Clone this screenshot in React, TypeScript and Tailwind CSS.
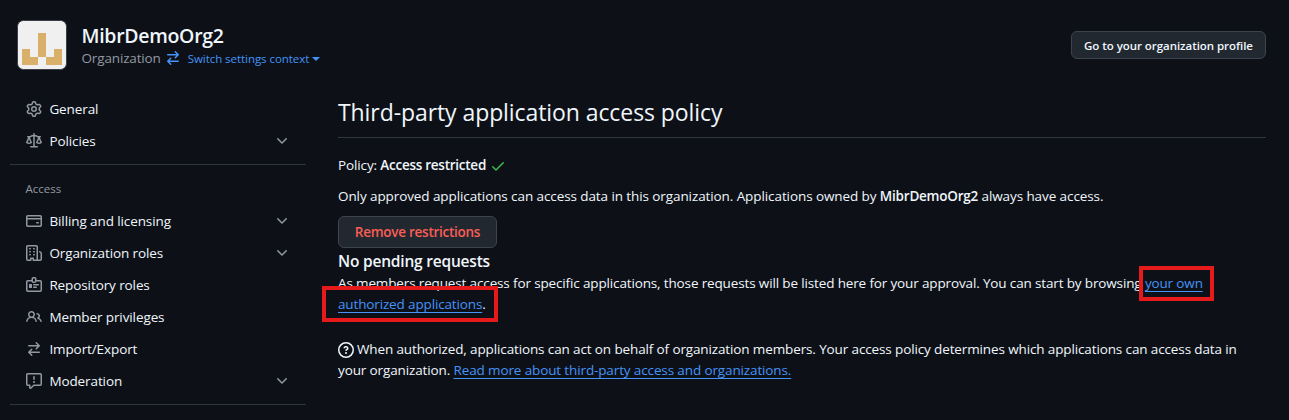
import type { ReactNode } from "react";

const paths = {
  gear: "M8 0a8.2 8.2 0 0 1 .701.031C9.444.095 9.99.645 10.16 1.29l.288 1.107c.018.066.079.158.212.224.231.114.454.243.668.386.123.082.233.09.299.071l1.103-.303c.644-.176 1.392.021 1.82.63.27.385.506.792.704 1.218.315.675.111 1.422-.364 1.891l-.814.806c-.049.048-.098.147-.088.294.016.257.016.515 0 .772-.01.147.038.246.088.294l.814.806c.475.469.679 1.216.364 1.891a7.977 7.977 0 0 1-.704 1.217c-.428.61-1.176.807-1.82.63l-1.102-.302c-.067-.019-.177-.011-.3.071a5.909 5.909 0 0 1-.668.386c-.133.066-.194.158-.211.224l-.29 1.106c-.168.646-.715 1.196-1.458 1.26a8.006 8.006 0 0 1-1.402 0c-.743-.064-1.289-.614-1.458-1.26l-.289-1.106c-.018-.066-.079-.158-.212-.224a5.738 5.738 0 0 1-.668-.386c-.123-.082-.233-.09-.299-.071l-1.103.303c-.644.176-1.392-.021-1.82-.63a8.12 8.12 0 0 1-.704-1.218c-.315-.675-.111-1.422.363-1.891l.815-.806c.05-.048.098-.147.088-.294a6.214 6.214 0 0 1 0-.772c.01-.147-.038-.246-.088-.294l-.815-.806C.635 6.045.431 5.298.746 4.623a7.92 7.92 0 0 1 .704-1.217c.428-.61 1.176-.807 1.82-.63l1.102.302c.067.019.177.011.3-.071.214-.143.437-.272.668-.386.133-.066.194-.158.211-.224l.29-1.106C6.009.645 6.556.095 7.299.03 7.53.01 7.764 0 8 0Zm-.571 1.525c-.036.003-.108.036-.137.146l-.289 1.105c-.147.561-.549.967-.998 1.189-.173.086-.34.183-.5.29-.417.278-.97.423-1.529.27l-1.103-.303c-.109-.03-.175.016-.195.045-.22.312-.412.644-.573.99-.014.031-.021.11.059.19l.815.806c.411.406.562.957.53 1.456a4.709 4.709 0 0 0 0 .582c.032.499-.119 1.05-.53 1.456l-.815.806c-.081.08-.073.159-.059.19.162.346.353.677.573.989.02.03.085.076.195.046l1.102-.303c.56-.153 1.113-.008 1.53.27.161.107.328.204.501.29.447.222.85.629.997 1.189l.289 1.105c.029.109.101.143.137.146a6.6 6.6 0 0 0 1.142 0c.036-.003.108-.036.137-.146l.289-1.105c.147-.561.549-.967.998-1.189.173-.086.34-.183.5-.29.417-.278.97-.423 1.529-.27l1.103.303c.109.029.175-.016.195-.045.22-.313.411-.644.573-.99.014-.031.021-.11-.059-.19l-.815-.806c-.411-.406-.562-.957-.53-1.456a4.709 4.709 0 0 0 0-.582c-.032-.499.119-1.05.53-1.456l.815-.806c.081-.08.073-.159.059-.19a6.464 6.464 0 0 0-.573-.989c-.02-.03-.085-.076-.195-.046l-1.102.303c-.56.153-1.113.008-1.53-.27a4.44 4.44 0 0 0-.501-.29c-.447-.222-.85-.629-.997-1.189l-.289-1.105c-.029-.11-.101-.143-.137-.146a6.6 6.6 0 0 0-1.142 0ZM11 8a3 3 0 1 1-6 0 3 3 0 0 1 6 0ZM9.5 8a1.5 1.5 0 1 0-3.001.001A1.5 1.5 0 0 0 9.5 8Z",
  law: "M8.75.75V2h.985c.304 0 .603.08.867.231l1.29.736c.038.022.08.033.124.033h2.234a.75.75 0 0 1 0 1.5h-.427l2.111 4.692a.75.75 0 0 1-.154.838l-.53-.53.529.531-.001.002-.002.002-.006.006-.006.005-.01.01-.045.04c-.21.176-.441.327-.686.45C14.556 10.78 13.88 11 13 11a4.498 4.498 0 0 1-2.023-.454 3.544 3.544 0 0 1-.686-.45l-.045-.04-.016-.015-.006-.006-.004-.004v-.001a.75.75 0 0 1-.154-.838L12.178 4.5h-.162c-.305 0-.604-.079-.868-.231l-1.29-.736a.245.245 0 0 0-.124-.033H8.75V13h2.5a.75.75 0 0 1 0 1.5h-6.5a.75.75 0 0 1 0-1.5h2.5V3.5h-.984a.245.245 0 0 0-.124.033l-1.289.737c-.265.15-.564.23-.869.23h-.162l2.112 4.692a.75.75 0 0 1-.154.838l-.53-.53.529.531-.001.002-.002.002-.006.006-.016.015-.045.04c-.21.176-.441.327-.686.45C4.556 10.78 3.88 11 3 11a4.498 4.498 0 0 1-2.023-.454 3.544 3.544 0 0 1-.686-.45l-.045-.04-.016-.015-.006-.006-.004-.004v-.001a.75.75 0 0 1-.154-.838L2.178 4.5H1.75a.75.75 0 0 1 0-1.5h2.234a.249.249 0 0 0 .125-.033l1.288-.737c.265-.15.564-.23.869-.23h.984V.75a.75.75 0 0 1 1.5 0Zm2.945 8.477c.285.135.718.273 1.305.273s1.02-.138 1.305-.273L13 6.327Zm-10 0c.285.135.718.273 1.305.273s1.02-.138 1.305-.273L3 6.327Z",
  card: "M10.75 9a.75.75 0 0 0 0 1.5h1.5a.75.75 0 0 0 0-1.5h-1.5Z M0 3.75C0 2.784.784 2 1.75 2h12.5c.966 0 1.75.784 1.75 1.75v8.5A1.75 1.75 0 0 1 14.25 14H1.75A1.75 1.75 0 0 1 0 12.25ZM14.5 6.5h-13v5.75c0 .138.112.25.25.25h12.5a.25.25 0 0 0 .25-.25Zm0-2.75a.25.25 0 0 0-.25-.25H1.75a.25.25 0 0 0-.25.25V5h13Z",
  organization: "M1.75 16A1.75 1.75 0 0 1 0 14.25V1.75C0 .784.784 0 1.75 0h8.5C11.216 0 12 .784 12 1.75v12.5c0 .085-.006.168-.018.25h2.268a.25.25 0 0 0 .25-.25V8.285a.25.25 0 0 0-.111-.208l-1.055-.703a.749.749 0 1 1 .832-1.248l1.055.703c.487.325.779.871.779 1.456v5.965A1.75 1.75 0 0 1 14.25 16h-3.5a.766.766 0 0 1-.197-.026c-.099.017-.2.026-.303.026h-3a.75.75 0 0 1-.75-.75V14h-1v1.25a.75.75 0 0 1-.75.75Zm-.25-1.75c0 .138.112.25.25.25H4v-1.25a.75.75 0 0 1 .75-.75h2.5a.75.75 0 0 1 .75.75v1.25h2.25a.25.25 0 0 0 .25-.25V1.75a.25.25 0 0 0-.25-.25h-8.5a.25.25 0 0 0-.25.25ZM3.75 6h.5a.75.75 0 0 1 0 1.5h-.5a.75.75 0 0 1 0-1.5ZM3 3.75A.75.75 0 0 1 3.75 3h.5a.75.75 0 0 1 0 1.5h-.5A.75.75 0 0 1 3 3.75Zm4 3A.75.75 0 0 1 7.75 6h.5a.75.75 0 0 1 0 1.5h-.5A.75.75 0 0 1 7 6.75ZM7.75 3h.5a.75.75 0 0 1 0 1.5h-.5a.75.75 0 0 1 0-1.5ZM3 9.75A.75.75 0 0 1 3.75 9h.5a.75.75 0 0 1 0 1.5h-.5A.75.75 0 0 1 3 9.75ZM7.75 9h.5a.75.75 0 0 1 0 1.5h-.5a.75.75 0 0 1 0-1.5Z",
  badge: "M3 7.5a.5.5 0 0 1 .5-.5h2a.5.5 0 0 1 .5.5v3a.5.5 0 0 1-.5.5h-2a.5.5 0 0 1-.5-.5v-3Zm10 .25a.75.75 0 0 1-.75.75h-4.5a.75.75 0 0 1 0-1.5h4.5a.75.75 0 0 1 .75.75ZM10.25 11a.75.75 0 0 0 0-1.5h-2.5a.75.75 0 0 0 0 1.5h2.5Z M7.25 0h1.5c.966 0 1.75.784 1.75 1.75V3h3.75c.966 0 1.75.784 1.75 1.75v8.5A1.75 1.75 0 0 1 14.25 15H1.75A1.75 1.75 0 0 1 0 13.25v-8.5C0 3.784.784 3 1.75 3H5.5V1.75C5.5.784 6.284 0 7.25 0Zm3.232 4.5A1.75 1.75 0 0 1 8.75 6h-1.5a1.75 1.75 0 0 1-1.732-1.5H1.75a.25.25 0 0 0-.25.25v8.5c0 .138.112.25.25.25h12.5a.25.25 0 0 0 .25-.25v-8.5a.25.25 0 0 0-.25-.25ZM7 1.75v2.5c0 .138.112.25.25.25h1.5A.25.25 0 0 0 9 4.25v-2.5a.25.25 0 0 0-.25-.25h-1.5a.25.25 0 0 0-.25.25Z",
  people: "M2 5.5a3.5 3.5 0 1 1 5.898 2.549 5.508 5.508 0 0 1 3.034 4.084.75.75 0 1 1-1.482.235 4 4 0 0 0-7.9 0 .75.75 0 0 1-1.482-.236A5.507 5.507 0 0 1 3.102 8.05 3.493 3.493 0 0 1 2 5.5ZM11 4a3.001 3.001 0 0 1 2.22 5.018 5.01 5.01 0 0 1 2.56 3.012.749.749 0 0 1-.885.954.752.752 0 0 1-.549-.514 3.507 3.507 0 0 0-2.522-2.372.75.75 0 0 1-.574-.73v-.352a.75.75 0 0 1 .416-.672A1.5 1.5 0 0 0 11 5.5.75.75 0 0 1 11 4Zm-5.5-.5a2 2 0 1 0-.001 3.999A2 2 0 0 0 5.5 3.5Z",
  swap: "M5.22 14.78a.75.75 0 0 0 1.06-1.06L4.56 12h8.69a.75.75 0 0 0 0-1.5H4.56l1.72-1.72a.75.75 0 0 0-1.06-1.06l-3 3a.75.75 0 0 0 0 1.06l3 3Zm5.56-6.5a.75.75 0 1 1-1.06-1.06l1.72-1.72H2.75a.75.75 0 0 1 0-1.5h8.69L9.72 2.28a.75.75 0 0 1 1.06-1.06l3 3a.75.75 0 0 1 0 1.06l-3 3Z",
  report: "M0 1.75C0 .784.784 0 1.75 0h12.5C15.216 0 16 .784 16 1.75v9.5A1.75 1.75 0 0 1 14.25 13H8.06l-2.573 2.573A1.458 1.458 0 0 1 3 14.543V13H1.75A1.75 1.75 0 0 1 0 11.25Zm1.75-.25a.25.25 0 0 0-.25.25v9.5c0 .138.112.25.25.25h2a.75.75 0 0 1 .75.75v2.19l2.72-2.72a.749.749 0 0 1 .53-.22h6.5a.25.25 0 0 0 .25-.25v-9.5a.25.25 0 0 0-.25-.25Zm7 2.25v2.5a.75.75 0 0 1-1.5 0v-2.5a.75.75 0 0 1 1.5 0ZM9 9a1 1 0 1 1-2 0 1 1 0 0 1 2 0Z",
  chevron: "M12.78 5.22a.749.749 0 0 1 0 1.06l-4.25 4.25a.749.749 0 0 1-1.06 0L3.22 6.28a.749.749 0 1 1 1.06-1.06L8 8.939l3.72-3.719a.749.749 0 0 1 1.06 0Z",
  check: "M13.78 4.22a.75.75 0 0 1 0 1.06l-7.25 7.25a.75.75 0 0 1-1.06 0L2.22 9.28a.751.751 0 0 1 .018-1.042.751.751 0 0 1 1.042-.018L6 10.94l6.72-6.72a.75.75 0 0 1 1.06 0Z",
  question: "M0 8a8 8 0 1 1 16 0A8 8 0 0 1 0 8Zm8-6.5a6.5 6.5 0 1 0 0 13 6.5 6.5 0 0 0 0-13ZM6.92 6.085h.001a.749.749 0 1 1-1.342-.67c.169-.339.436-.701.849-.977C6.845 4.16 7.369 4 8 4a2.756 2.756 0 0 1 1.637.525c.503.377.863.965.863 1.725 0 .448-.115.83-.329 1.15-.205.307-.47.513-.692.662-.109.072-.22.138-.313.195l-.006.004a6.24 6.24 0 0 0-.26.16.952.952 0 0 0-.276.245.75.75 0 0 1-1.248-.832c.184-.264.42-.489.692-.661.103-.067.207-.132.313-.195l.007-.004c.1-.061.182-.11.258-.161a.969.969 0 0 0 .277-.245C8.96 6.514 9 6.427 9 6.25a.612.612 0 0 0-.262-.525A1.27 1.27 0 0 0 8 5.5c-.369 0-.595.09-.74.187a1.01 1.01 0 0 0-.34.398ZM9 11a1 1 0 1 1-2 0 1 1 0 0 1 2 0Z",
};

type IconName = keyof typeof paths;

function Icon({ name, className = "" }: { name: IconName; className?: string }) {
  return (
    <svg viewBox="0 0 16 16" className={`size-4 shrink-0 fill-current ${className}`} aria-hidden="true">
      <path d={paths[name]} />
    </svg>
  );
}

function NavItem({ icon, label, expandable = false }: { icon: IconName; label: string; expandable?: boolean }) {
  return (
    <li className="flex h-8 items-center pr-4 pl-4">
      <Icon name={icon} className="text-[#9198a1]" />
      <span className="ml-[7.4px] flex-1 text-[13.5px] leading-5 tracking-[-0.1px]">{label}</span>
      {expandable && <Icon name="chevron" className="text-[#9198a1]" />}
    </li>
  );
}

function Link({ children }: { children: ReactNode }) {
  return (
    <a className="text-[#4493f8] underline decoration-1 underline-offset-[3px] [text-decoration-skip-ink:none]">
      {children}
    </a>
  );
}

export default function App() {
  return (
    <div className="h-[420px] w-[1289px] overflow-hidden bg-[#0d1117] font-['Open_Sans','Noto_Sans',sans-serif] text-[13.5px] leading-[21px] text-[#f0f6fc]">
      <header className="flex h-[93px] items-start pt-5 pr-[23px] pl-[17px]">
        <svg viewBox="0 0 50 50" className="size-[50px] shrink-0" aria-hidden="true">
          <rect x="0.5" y="0.5" width="49" height="49" rx="6" fill="#f0f0f0" stroke="#3a3f46" />
          <path d="M21 13h8v24h-8zM5 29h8v8h8v8H5zM37 29h8v16H29v-8h8z" fill="#d8b06a" />
        </svg>
        <div className="ml-[14.5px] flex-1 pt-[3px]">
          <h1 className="text-[19.5px] leading-[26px] font-semibold tracking-[-0.3px]">MibrDemoOrg2</h1>
          <div className="-mt-px flex h-5 items-center">
            <span className="text-[13.5px] tracking-[-0.15px] text-[#9198a1]">Organization</span>
            <Icon name="swap" className="ml-1 text-[#4493f8]" />
            <span className="ml-[7px] text-[11.5px] tracking-[-0.05px] text-[#4493f8]">Switch settings context</span>
            <svg viewBox="0 0 8 4" className="mt-0.5 ml-[3px] h-1 w-2 fill-[#4493f8]" aria-hidden="true">
              <path d="M0 0h8L4 4z" />
            </svg>
          </div>
        </div>
        <button className="mt-[11px] h-7 w-[195px] rounded-md border border-[#3d444d] bg-[#212830] pt-px text-[11.5px] leading-none font-semibold tracking-[-0.05px]">
          Go to your organization profile
        </button>
      </header>

      <div className="flex items-start pr-[23px] pl-[10px]">
        <nav className="w-[296px] shrink-0">
          <ul>
            <NavItem icon="gear" label="General" />
            <NavItem icon="law" label="Policies" expandable />
          </ul>
          <hr className="mt-[7px] border-[#30363d]" />
          <h2 className="mt-[13px] mb-1.5 pl-[15.5px] text-[11.5px] leading-[21px] text-[#9198a1]">Access</h2>
          <ul>
            <NavItem icon="card" label="Billing and licensing" expandable />
            <NavItem icon="organization" label="Organization roles" expandable />
            <NavItem icon="badge" label="Repository roles" />
            <NavItem icon="people" label="Member privileges" />
            <NavItem icon="swap" label="Import/Export" />
            <NavItem icon="report" label="Moderation" expandable />
          </ul>
          <hr className="mt-[7px] border-[#30363d]" />
        </nav>

        <main className="relative ml-8 flex-1 tracking-[-0.125px]">
          <h2 className="h-[45px] border-b border-[#30363d] text-[23px] leading-[38px] tracking-[-0.08px]">
            Third-party application access policy
          </h2>
          <p className="mt-[17px] flex items-center">
            <span>
              Policy: <strong className="font-semibold tracking-[-0.26px]">Access restricted</strong>
            </span>
            <Icon name="check" className="ml-1 text-[#3fb950]" />
          </p>
          <p className="mt-[10px] whitespace-nowrap tracking-[-0.091px]">
            Only approved applications can access data in this organization. Applications owned by{" "}
            <strong className="font-semibold tracking-[-0.22px]">MibrDemoOrg2</strong> always have access.
          </p>
          <button className="mt-[9px] block h-8 w-[159px] rounded-md border border-[#3d444d] bg-[#212830] pt-0.5 leading-none font-semibold tracking-[-0.26px] text-[#fa5e55]">
            Remove restrictions
          </button>
          <h3 className="h-[25px] pt-px text-[15.5px] leading-6 font-semibold tracking-[-0.2px]">
            No pending requests
          </h3>
          <p className="whitespace-nowrap tracking-[-0.142px]">
            As members request access for specific applications, those requests will be listed here for your approval.
            You can start by browsing <Link>your own</Link>
            <br />
            <Link>authorized applications</Link>.
          </p>
          <p className="mt-6 whitespace-nowrap">
            <Icon name="question" className="mr-[3px] inline-block align-[-4px]" />
            When authorized, applications can act on behalf of organization members. Your access policy determines which
            applications can access data in
            <br />
            your organization. <Link>Read more about third-party access and organizations.</Link>
          </p>

          <div className="absolute top-[193px] left-[-16px] h-9 w-[176px] border-4 border-[#e6191b]" />
          <div className="absolute top-[173px] left-[801px] h-[35px] w-[75px] border-4 border-[#e6191b]" />
        </main>
      </div>
    </div>
  );
}
